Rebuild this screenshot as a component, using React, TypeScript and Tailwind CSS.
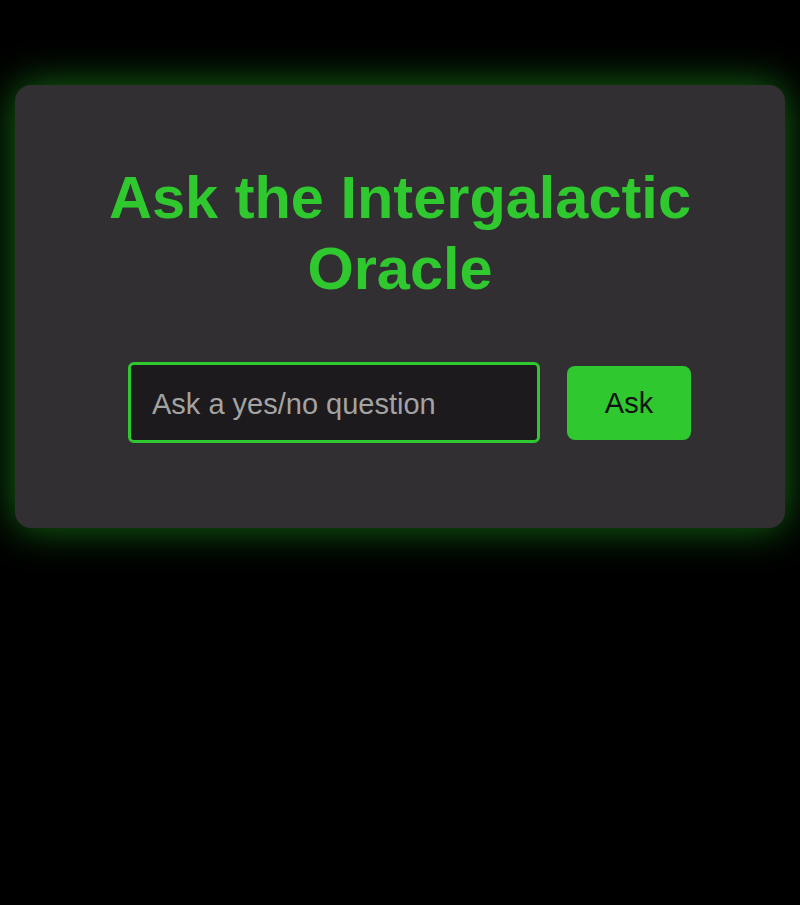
import React, { useState } from 'react';

const App: React.FC = () => {
  const [question, setQuestion] = useState('');

  return (
    <div className="min-h-[905px] w-full bg-black pt-[85px] px-[15px]" style={{ fontFamily: '"Liberation Sans", Arial, sans-serif' }}>
      {/* Oracle card */}
      <div className="w-full h-[443px] rounded-2xl bg-[#312f32] shadow-[0_0_40px_rgba(40,200,40,0.55)] pt-[77px] flex flex-col items-center">
        <h1 className="text-[59.5px] leading-[71px] font-bold text-[#2fc82f] text-center max-w-[620px]">
          Ask the Intergalactic Oracle
        </h1>

        <div className="mt-[58px] flex items-center gap-[27px] pl-[19px]">
          <input
            value={question}
            onChange={e => setQuestion(e.target.value)}
            placeholder="Ask a yes/no question"
            className="w-[412px] h-[81px] rounded-md border-[3px] border-[#2fc82f] bg-[#1c1a1d] px-[21px] pt-[4px] text-[29px] text-gray-200 placeholder:text-[#a3a3a3] outline-none"
          />
          <button className="w-[124px] h-[74px] rounded-lg bg-[#2fc92f] pt-[3px] text-[29px] text-[#111]">
            Ask
          </button>
        </div>
      </div>
    </div>
  );
};

export default App;
